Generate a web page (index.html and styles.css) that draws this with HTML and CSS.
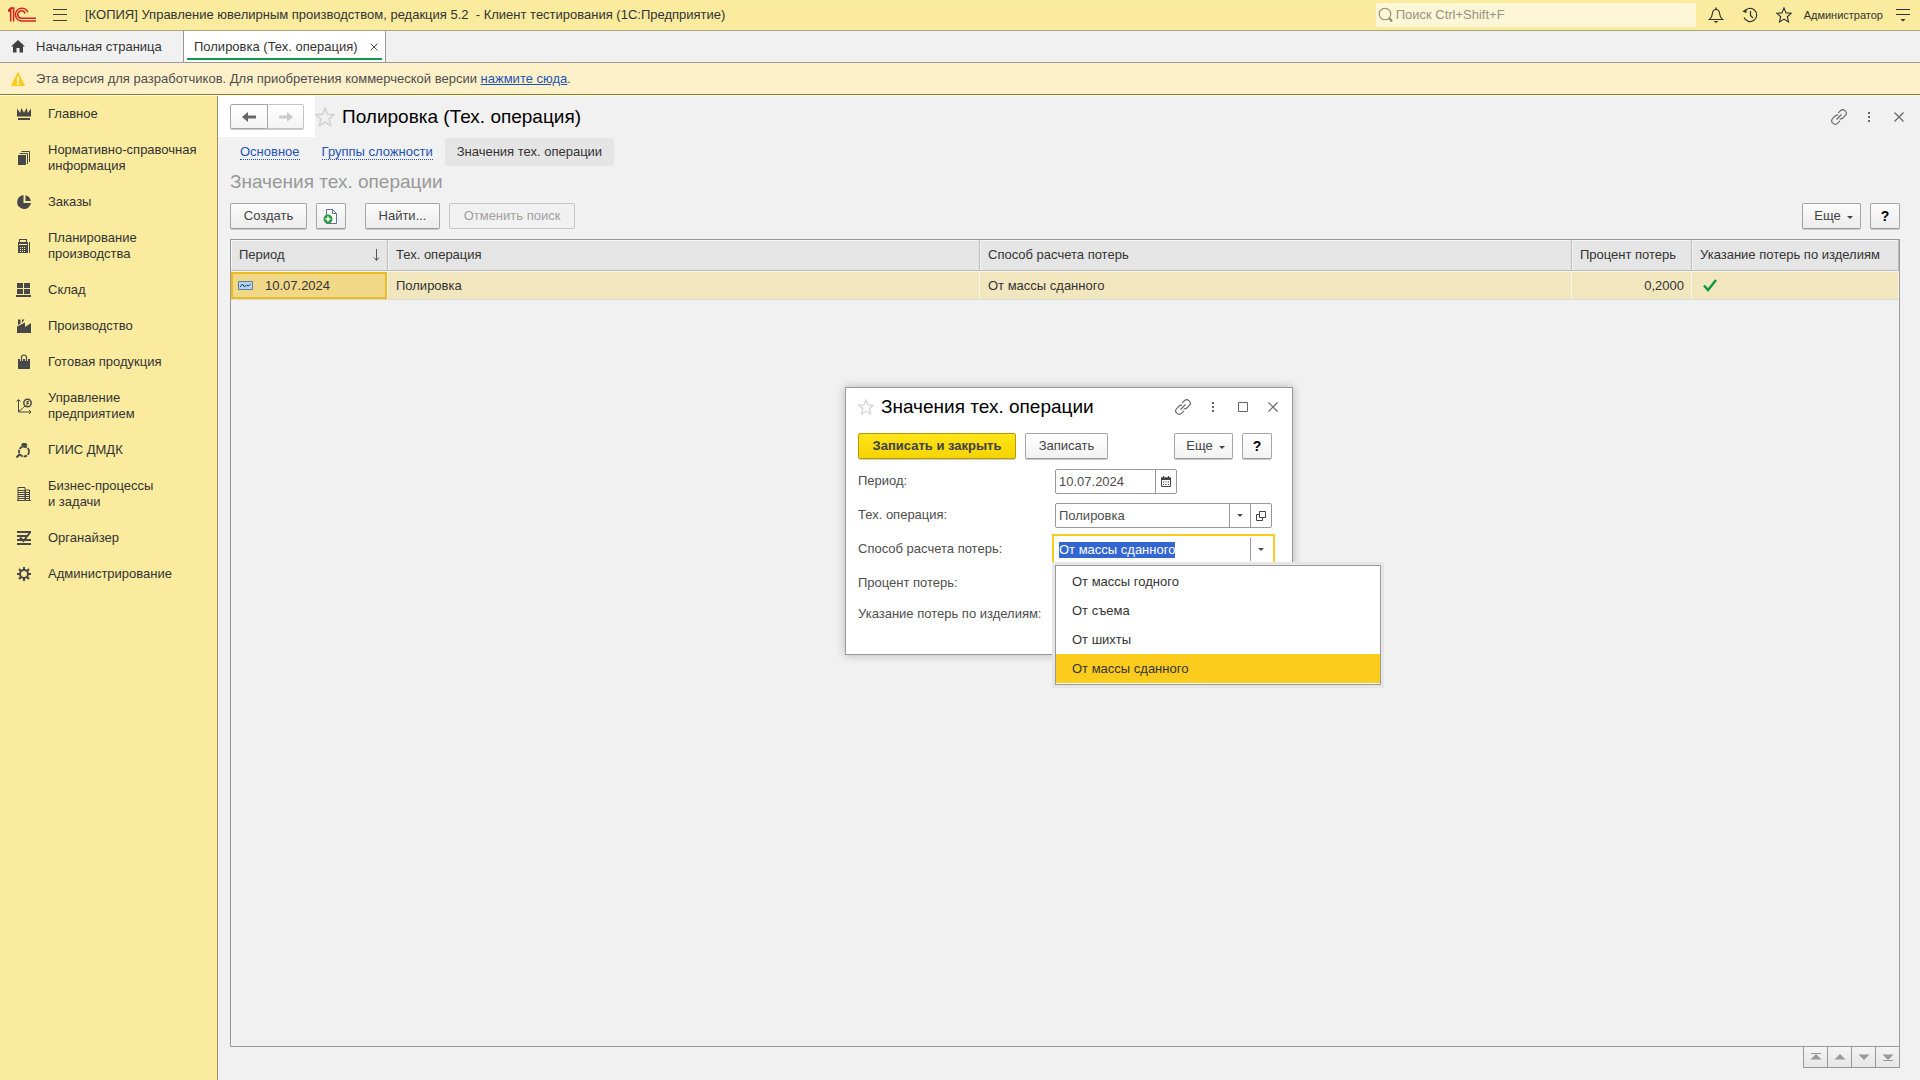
FILE: index.html
```html
<!DOCTYPE html>
<html lang="ru">
<head>
<meta charset="utf-8">
<title>Полировка (Тех. операция)</title>
<link rel="stylesheet" href="styles.css">
</head>
<body>
<svg class="sprite" aria-hidden="true">
  <symbol id="star" viewBox="0 0 18 18"><path d="M9 1l2.3 5.6 5.9.4-4.5 3.9 1.4 5.9L9 13.6l-5.1 3.2 1.4-5.9L.8 7l5.9-.4z" fill="none" stroke="currentColor" stroke-width="1.3"/></symbol>
  <symbol id="link" viewBox="0 0 16 16"><g fill="none" stroke="currentColor" stroke-width="1.1"><path d="M7 4.2l2.6-2.6a3 3 0 0 1 4.2 0l.6.6a3 3 0 0 1 0 4.2l-2.6 2.6a3 3 0 0 1-3 .7"/><path d="M9 11.8l-2.6 2.6a3 3 0 0 1-4.2 0l-.6-.6a3 3 0 0 1 0-4.2l2.6-2.6a3 3 0 0 1 3-.7"/><path d="M5.5 10.5l5-5"/></g></symbol>
  <symbol id="dots" viewBox="0 0 16 16"><path d="M7 3h2v2H7zM7 7h2v2H7zM7 11h2v2H7z" fill="currentColor"/></symbol>
  <symbol id="cross" viewBox="0 0 16 16"><path d="M3.5 3.5l9 9M12.5 3.5l-9 9" stroke="currentColor" stroke-width="1.2"/></symbol>
  <symbol id="caret" viewBox="0 0 6 4"><path d="M0 0h6L3 3z" fill="currentColor"/></symbol>
</svg>

<header class="titlebar">
  <svg class="logo" viewBox="0 0 30 16" aria-hidden="true"><g fill="none" stroke="#d8231f" stroke-width="1.6"><path d="M0 3.8h3M2.8 1.2v13.6M0 3.8L3 .9h2.8v13.9"/><path d="M20.5 5.2A6.6 6.6 0 1 0 14.3 14.2H29"/><path d="M17.6 6.4A3.8 3.8 0 1 0 14.3 11.3H29"/></g></svg>
  <button class="icon-btn menu" type="button" aria-label="Меню"><svg width="14" height="12" viewBox="0 0 14 12"><path d="M0 .5h14M0 5.5h14M0 11.5h14" stroke="#404040"/></svg></button>
  <span class="app-name">[КОПИЯ] Управление ювелирным производством, редакция 5.2&nbsp; - Клиент тестирования (1С:Предприятие)</span>
  <label class="search">
    <svg width="16" height="16" viewBox="0 0 16 16"><circle cx="7" cy="7" r="5.8" fill="none" stroke="#8f8a6c" stroke-width="1.1"/><path d="M11 11l3 3.5" stroke="#8f8a6c" stroke-width="2.2"/></svg>
    <input type="text" placeholder="Поиск Ctrl+Shift+F" aria-label="Поиск">
  </label>
  <div class="head-tools">
    <button class="icon-btn" type="button" aria-label="Уведомления"><svg width="16" height="16" viewBox="0 0 16 16"><path d="M1.5 12.5c2-1.5 2.5-3 2.8-5.5C4.600 4 6 2.500 8 2.500S11.400 4 11.700 7c.300 2.500.800 4 2.800 5.500z" fill="none" stroke="#333" stroke-width="1.2"/><path d="M8 .5v2" stroke="#333" stroke-width="1.5"/><path d="M5.500 14h5L8 16z" fill="#333"/></svg></button>
    <button class="icon-btn" type="button" aria-label="История"><svg width="16" height="16" viewBox="0 0 16 16"><path d="M2.200 5A6.600 6.600 0 1 1 2 10.500" fill="none" stroke="#333" stroke-width="1.2"/><path d="M.3 4.500L4.500 6V1.800z" fill="#333"/><path d="M8.500 4v4.500l2.500 2.500" fill="none" stroke="#333" stroke-width="1.2"/></svg></button>
    <button class="icon-btn" type="button" aria-label="Избранное"><svg width="16" height="16"><use href="#star"/></svg></button>
  </div>
  <span class="user">Администратор</span>
  <button class="icon-btn" type="button" aria-label="Настройки"><svg width="14" height="14" viewBox="0 0 14 14"><path d="M0 1.5h14M0 6.5h14" stroke="#333"/><path d="M4.500 11h5L7 13.500z" fill="#333"/></svg></button>
</header>

<nav class="tabs">
  <a class="tab home" href="#"><svg width="14" height="13" viewBox="0 0 14 13"><path d="M7 0l7 6.500h-2V12.500H8.500V8h-3v4.500H2v-6H0z" fill="#404040"/></svg>Начальная страница</a>
  <div class="tab active"><span>Полировка (Тех. операция)</span><button class="icon-btn" type="button" aria-label="Закрыть вкладку"><svg width="12" height="12"><use href="#cross"/></svg></button></div>
</nav>

<p class="notice">
  <svg width="14" height="14" viewBox="0 0 14 14"><path d="M7 .5L13.500 13.500H.5z" fill="#fbcb1e" stroke="#fbcb1e" stroke-linejoin="round"/><path d="M7 4.500v5M7 10.500v2" stroke="#fff" stroke-width="1.6"/></svg>
  <span>Эта версия для разработчиков. Для приобретения коммерческой версии <a href="#">нажмите сюда</a>.</span>
</p>

<div class="workspace">
  <nav class="sidebar">
    <a href="#"><svg viewBox="0 0 16 16"><path d="M1 2.500L4.200 7 5.300 2 8 6.800 10.700 2 11.800 7 15 2.500V10.500H1zM2 12h12v2H2z"/></svg><span>Главное</span></a>
    <a href="#"><svg viewBox="0 0 16 16"><path d="M2 5h8v10H2z"/><path d="M3.500 3.500h8V14M5.500 1.500h8V12" fill="none" stroke="#474747"/></svg><span>Нормативно-справочная<br>информация</span></a>
    <a href="#"><svg viewBox="0 0 16 16"><path d="M7.500 1v8H15A7 7 0 1 1 7.500 1z"/><path d="M9.500 1.200A7 7 0 0 1 14.800 7H9.500z"/></svg><span>Заказы</span></a>
    <a href="#"><svg viewBox="0 0 16 16"><path fill-rule="evenodd" d="M3 1h8v3h1v11H2V4h1zM4 2v2h6V2zM3 6v1h8V6zM4 9v1h1V9zM6 9v1h1V9zM8 9v1h1V9zM4 11v1h1v-1zM6 11v1h1v-1zM8 11v1h1v-1zM4 13v1h1v-1zM6 13v1h1v-1zM8 13v1h1v-1z"/><path d="M13 4h1v11h-1z"/></svg><span>Планирование<br>производства</span></a>
    <a href="#"><svg viewBox="0 0 16 16"><path d="M1 1h6v5H1zM8 1h6v5H8zM1 7h6v5H1zM8 7h6v5H8zM0 13h15v2H0z"/></svg><span>Склад</span></a>
    <a href="#"><svg viewBox="0 0 16 16"><path d="M1 15V8.500L9 4.500V9l6-4v10zM2 1.500h2.500v4L2 7zM6 1.500h2.500L6 5z"/></svg><span>Производство</span></a>
    <a href="#"><svg viewBox="0 0 16 16"><path d="M2 5h12v10H2z"/><path d="M5.500 7V3.500a2.500 2.500 0 0 1 5 0V7" fill="none" stroke="#faeb9e" stroke-width="3"/><path d="M5.500 8V3.500a2.500 2.500 0 0 1 5 0V8" fill="none" stroke="#474747" stroke-width="1.2"/></svg><span>Готовая продукция</span></a>
    <a href="#"><svg viewBox="0 0 16 16"><path d="M2.500 2v12H15M.5 3.500l2-2 2 2M13 12l2 2-2 2M3 13c3-1 3-3 6-5" fill="none" stroke="#474747"/><circle cx="11.500" cy="5" r="3.700" fill="none" stroke="#474747" stroke-width="1.5"/><path d="M10.500 3h2.500v1h-1.500v.7H13V6h-1.500v1.500h-1z"/></svg><span>Управление<br>предприятием</span></a>
    <a href="#"><svg viewBox="0 0 16 16"><circle cx="8" cy="9.500" r="5" fill="none" stroke="#474747" stroke-width="1.8" stroke-dasharray="3.5 1"/><path d="M5 3l1.500-2h3.500L11.500 3 8 6z"/><path d="M4 12L.5 15.500" stroke="#474747" stroke-width="2"/></svg><span>ГИИС ДМДК</span></a>
    <a href="#"><svg viewBox="0 0 16 16"><path d="M2 1.500h7v13H2zM9.500 4h4v10.500h-4z" fill="none" stroke="#474747"/><path d="M2 4.500h7M2 6.500h7M2 8.500h7M2 10.500h7M2 12.500h7M9 6.500h5M9 8.500h5M9 10.500h5M9 12.500h5M1 14.500h14" stroke="#474747"/></svg><span>Бизнес-процессы<br>и задачи</span></a>
    <a href="#"><svg viewBox="0 0 16 16"><path d="M1 2h14M1 6h10M1 10h14M1 14h14M14 2.500L7.500 11 4 7.500" fill="none" stroke="#474747" stroke-width="2"/></svg><span>Органайзер</span></a>
    <a href="#"><svg viewBox="0 0 16 16"><circle cx="8" cy="8" r="4" fill="none" stroke="#474747" stroke-width="2"/><path d="M8 1v3M8 12v3M1 8h3M12 8h3M3 3l2.200 2.200M10.800 10.800L13 13M13 3l-2.200 2.200M5.200 10.800L3 13" stroke="#474747" stroke-width="2"/></svg><span>Администрирование</span></a>
  </nav>

  <main class="content">
    <div class="page-head">
      <div class="history">
        <button type="button" aria-label="Назад"><svg width="14" height="12" viewBox="0 0 14 12"><path d="M0 6l6-5v3.500h8v3H6V11z" fill="#666"/></svg></button><button type="button" aria-label="Вперед" disabled><svg width="14" height="12" viewBox="0 0 14 12"><path d="M14 6L8 1v3.500H0v3h8V11z" fill="#ccc"/></svg></button>
      </div>
      <button class="icon-btn pale" type="button" aria-label="В избранное"><svg width="20" height="20"><use href="#star"/></svg></button>
      <h1>Полировка (Тех. операция)</h1>
      <div class="win-tools">
        <button class="icon-btn" type="button" aria-label="Получить ссылку"><svg width="16" height="16"><use href="#link"/></svg></button>
        <button class="icon-btn" type="button" aria-label="Дополнительно"><svg width="16" height="16"><use href="#dots"/></svg></button>
        <button class="icon-btn" type="button" aria-label="Закрыть"><svg width="16" height="16"><use href="#cross"/></svg></button>
      </div>
    </div>

    <nav class="subtabs"><a href="#"><span>Основное</span></a><a href="#"><span>Группы сложности</span></a><a class="current" href="#">Значения тех. операции</a></nav>
    <h2>Значения тех. операции</h2>

    <div class="commands">
      <button class="btn create" type="button">Создать</button>
      <button class="btn square" type="button" aria-label="Скопировать"><svg width="16" height="16" viewBox="0 0 16 16"><path d="M3.500 1.500h6l4 4v10h-10z" fill="#fff" stroke="#60758c"/><path d="M9.500 1.500v4h4" fill="none" stroke="#60758c"/><circle cx="5" cy="11" r="4.500" fill="#2c9b3f"/><path d="M5 8.500v5M2.500 11h5" stroke="#fff" stroke-width="1.5"/></svg></button>
      <button class="btn find" type="button">Найти...</button>
      <button class="btn cancel" type="button" disabled>Отменить поиск</button>
      <span class="spacer"></span>
      <button class="btn more" type="button">Еще <svg width="6" height="4"><use href="#caret"/></svg></button>
      <button class="btn square help" type="button">?</button>
    </div>

    <div class="grid">
      <table>
        <colgroup><col class="c-period"><col><col><col class="c-percent"><col class="c-flag"></colgroup>
        <thead><tr><th><div class="sorted">Период<svg width="7" height="12" viewBox="0 0 7 12"><path d="M3.500 0v11M1 8.500l2.500 3L6 8.500" fill="none" stroke="#555"/></svg></div></th><th>Тех. операция</th><th>Способ расчета потерь</th><th>Процент потерь</th><th>Указание потерь по изделиям</th></tr></thead>
        <tbody><tr><td class="cursor"><div class="period"><svg width="15" height="9" viewBox="0 0 15 9"><path d="M.5.5h14v8H.5z" fill="#b5d3ee" stroke="#5a7d9c"/><path d="M2 6l2.500-3L6.500 6l2-2 1.500 1 2.500-1.500" fill="none" stroke="#173f66"/></svg>10.07.2024</div></td><td>Полировка</td><td>От массы сданного</td><td class="num">0,2000</td><td class="flag"><svg width="14" height="13" viewBox="0 0 14 13"><path d="M1 6.500l4 4.500L13 1" fill="none" stroke="#0f9848" stroke-width="2.5"/></svg></td></tr></tbody>
      </table>
    </div>
    <div class="pager">
      <button type="button" aria-label="В начало"><svg viewBox="0 0 12 8"><path d="M1 .5h10" stroke="#999"/><path d="M6 1l5.500 5.500H.5z"/></svg></button>
      <button type="button" aria-label="Вверх"><svg viewBox="0 0 12 8"><path d="M6 1l5.500 5.500H.5z"/></svg></button>
      <button type="button" aria-label="Вниз"><svg viewBox="0 0 12 8"><path d="M6 7L.5 1.500h11z"/></svg></button>
      <button type="button" aria-label="В конец"><svg viewBox="0 0 12 8"><path d="M1 7.500h10" stroke="#999"/><path d="M6 7L.5 1.500h11z"/></svg></button>
    </div>
  </main>
</div>

<form class="dialog" role="dialog" aria-labelledby="dlg-title">
  <div class="dlg-head">
    <button class="icon-btn pale" type="button" aria-label="В избранное"><svg width="16" height="16"><use href="#star"/></svg></button>
    <h2 id="dlg-title">Значения тех. операции</h2>
    <div class="win-tools">
      <button class="icon-btn" type="button" aria-label="Получить ссылку"><svg width="16" height="16"><use href="#link"/></svg></button>
      <button class="icon-btn" type="button" aria-label="Дополнительно"><svg width="16" height="16"><use href="#dots"/></svg></button>
      <button class="icon-btn" type="button" aria-label="Развернуть"><svg width="16" height="16" viewBox="0 0 16 16"><path d="M3.500 3.500h9v9h-9z" fill="none" stroke="currentColor"/></svg></button>
      <button class="icon-btn" type="button" aria-label="Закрыть"><svg width="16" height="16"><use href="#cross"/></svg></button>
    </div>
  </div>
  <div class="dlg-commands">
    <button class="btn primary" type="button">Записать и закрыть</button>
    <button class="btn save" type="button">Записать</button>
    <span class="spacer"></span>
    <button class="btn more" type="button">Еще <svg width="6" height="4"><use href="#caret"/></svg></button>
    <button class="btn square help" type="button">?</button>
  </div>
  <div class="row"><label for="f-period">Период:</label>
    <div class="field date"><input id="f-period" type="text" value="10.07.2024"><button type="button" aria-label="Календарь"><svg width="10" height="11" viewBox="0 0 10 11"><path d="M.5 2h9v8.500h-9z" fill="none" stroke="#444"/><path d="M0 1.500h10v2.500H0zM2 0h1v2H2zM7 0h1v2H7z" fill="#444"/><path d="M2 6h6M2 8.500h6" stroke="#444" stroke-dasharray="1.2 1.2"/></svg></button></div></div>
  <div class="row"><label for="f-op">Тех. операция:</label>
    <div class="field"><input id="f-op" type="text" value="Полировка"><button type="button" aria-label="Выбрать"><svg width="6" height="4"><use href="#caret"/></svg></button><button type="button" aria-label="Открыть"><svg width="10" height="10" viewBox="0 0 10 10"><path d="M3.500.5h6v6h-6zM3 3.500H.5v6h6V7" fill="none" stroke="#444"/></svg></button></div></div>
  <div class="row"><label for="f-method">Способ расчета потерь:</label>
    <div class="field focused"><input id="f-method" type="text" role="combobox" aria-expanded="true" aria-controls="methods" value="От массы сданного"><button type="button" aria-label="Выбрать"><svg width="6" height="4"><use href="#caret"/></svg></button>
      <ul class="options" id="methods" role="listbox">
        <li role="option">От массы годного</li>
        <li role="option">От съема</li>
        <li role="option">От шихты</li>
        <li role="option" aria-selected="true">От массы сданного</li>
      </ul>
    </div></div>
  <div class="row"><label for="f-percent">Процент потерь:</label><div class="field date"><input id="f-percent" type="text"></div></div>
  <div class="row short"><label for="f-items">Указание потерь по изделиям:</label><input id="f-items" type="checkbox" checked></div>
</form>
<script src="script.js"></script>
</body>
</html>
```
FILE: styles.css
```css
* { box-sizing: border-box; }
body {
  margin: 0;
  min-height: 100vh;
  display: flex;
  flex-direction: column;
  position: relative;
  background: #f1f1f1;
  color: #333;
  font: 13px/16px "Liberation Sans", Arial, sans-serif;
}
button, input { font: inherit; color: inherit; margin: 0; }
button { padding: 0; }
svg { display: block; flex: none; }
h1, h2, p, ul { margin: 0; padding: 0; font-weight: normal; }
a { color: #1d53b5; }
.sprite { position: absolute; width: 0; height: 0; }
.spacer { flex: 1; }
.icon-btn { border: 0; background: none; display: flex; align-items: center; justify-content: center; color: #333; }

/* Title bar */
.titlebar {
  height: 31px;
  display: flex;
  align-items: center;
  padding: 0 10px 0 8px;
  background: #faeb9e;
  border-bottom: 1px solid #a9a57c;
}
.logo { width: 29px; height: 16px; }
.menu { margin: 0 18px 0 16px; }
.app-name { flex: 1; white-space: pre; }
.search {
  width: 320px;
  height: 24px;
  display: flex;
  align-items: center;
  gap: 2px;
  padding-left: 2px;
  background: #fdf7d8;
  border-radius: 2px;
  margin-right: 12px;
}
.search input { flex: 1; border: 0; background: none; padding: 0; outline: 0; }
.search input::placeholder { color: #98937a; opacity: 1; }
.head-tools { display: flex; gap: 18px; }
.user { font-size: 11px; margin: 0 13px 0 12px; }

/* Open windows */
.tabs { display: flex; height: 32px; border-bottom: 1px solid #999; }
.tab { display: flex; align-items: center; border-right: 1px solid #999; color: #333; text-decoration: none; }
.home { width: 184px; gap: 11px; padding-left: 11px; }
.active { position: relative; width: 202px; padding: 0 3px; background: #fff; }
.active > span { flex: 1; padding-left: 7px; line-height: 28px; }
.active::after { content: ""; position: absolute; left: 3px; right: 3px; bottom: 2px; height: 2px; background: #0f9950; }
.active .icon-btn { padding: 0 2px; }

.notice {
  display: flex;
  align-items: center;
  gap: 11px;
  height: 32px;
  padding-left: 11px;
  background: #fef1ca;
  border-bottom: 1px solid #94790f;
  color: #4d4d4d;
}

.workspace { flex: 1; display: flex; border-top: 1px solid #fff; }

/* Sections */
.sidebar { width: 218px; background: #faeb9e; border-right: 1px solid #99905f; }
.sidebar a { display: flex; align-items: center; gap: 16px; padding: 10px 0 10px 16px; color: #333; text-decoration: none; }
.sidebar svg { width: 16px; height: 16px; fill: #474747; }

/* Form */
.content { flex: 1; display: flex; flex-direction: column; padding: 0 20px 12px 0; min-width: 0; }
.content > * { margin-left: 12px; }
.content > .page-head { margin-left: 0; }
.page-head { display: flex; align-items: center; height: 42px; padding-bottom: 1px; }
.history { display: flex; width: 97px; height: 41px; padding: 8px 0 8px 12px; background: #fff; }
.history button { width: 38px; height: 25px; display: flex; align-items: center; justify-content: center; border: 1px solid #a6a6a6; border-radius: 2px 0 0 2px; background: linear-gradient(#fff, #f4f4f4); box-shadow: 0 1px 0 #ccc; }
.history button + button { border-left: 0; border-color: #c4c4c4; border-radius: 0 2px 2px 0; width: 36px; }
h1, h2 { font-size: 19px; line-height: 24px; color: #000; }
.page-head h1 { flex: 1; margin-left: 7px; }
.pale { color: #d0d0d0; }
.win-tools { display: flex; gap: 14px; }
.win-tools .icon-btn { color: #666; }
.page-head .win-tools { margin-right: -7px; }
.subtabs { display: flex; gap: 2px; line-height: 28px; }
.subtabs a { padding: 0 10px; text-decoration: none; }
.subtabs span { border-bottom: 1px dotted #1d53b5; }
.subtabs .current { padding: 0 12px; background: #e5e5e5; border-radius: 3px; color: #333; }
.content h2 { color: #999; margin-top: 4px; }

.commands { display: flex; gap: 9px; margin-top: 9px; }
.btn {
  display: flex;
  align-items: center;
  justify-content: center;
  gap: 6px;
  height: 26px;
  border: 1px solid #a6a6a6;
  border-bottom-color: #999;
  border-radius: 2px;
  background: linear-gradient(#fbfbfb, #ececec);
  box-shadow: 0 1px 0 #ccc;
  color: #444;
}
.btn:disabled { color: #a0a0a0; border-color: #c6c6c6; background: #f1f1f1; box-shadow: none; }
.create { width: 77px; }
.square { width: 30px; }
.find { width: 75px; margin-left: 10px; }
.cancel { width: 126px; }
.more { width: 59px; padding-left: 4px; }
.more svg { margin-top: 4px; }
.help { color: #000; font-size: 14px; font-weight: bold; }

.grid { flex: 1; margin-top: 10px; border: 1px solid #999; }
table { width: 100%; border-collapse: separate; border-spacing: 0; table-layout: fixed; }
.c-period { width: 157px; }
.c-percent { width: 120px; }
.c-flag { width: 207px; }
th, td { padding: 0 7px 0 8px; text-align: left; font-weight: normal; white-space: nowrap; }
th { height: 31px; background: #e5e5e5; border-right: 1px solid #bbb; border-bottom: 1px solid #bbb; box-shadow: inset 1px 1px 0 #f5f5f5; }
td { height: 29px; background: #f2e6be; border-right: 1px solid #fbf7e8; border-top: 1px solid #f8f5ea; border-bottom: 1px solid #d9d9d9; }
.sorted { display: flex; align-items: center; justify-content: space-between; }
td.cursor { padding: 0; }
.period { display: flex; align-items: center; gap: 12px; height: 27px; padding-left: 5px; border: 2px solid #ebbc1f; background: #f0d887; }
td.num { text-align: right; }
td.flag { padding-left: 11px; }

.pager { display: flex; align-self: flex-end; border-left: 1px solid #999; }
.pager button { width: 24px; height: 21px; display: flex; align-items: center; justify-content: center; border: solid #999; border-width: 0 1px 1px 0; background: linear-gradient(#f4f4f4, #e6e6e6); }
.pager svg { width: 12px; height: 8px; fill: #999; }

/* Record window */
.dialog {
  position: absolute;
  left: 845px;
  top: 387px;
  width: 448px;
  padding: 7px 20px 33px 12px;
  background: #fff;
  border: 1px solid #999;
  box-shadow: 0 0 9px rgba(0, 0, 0, .25);
  color: #4d4d4d;
}
.dlg-head { display: flex; align-items: center; gap: 7px; height: 24px; }
.dlg-head h2 { flex: 1; }
.dlg-head .win-tools { margin-right: -9px; }
.dlg-commands { display: flex; gap: 9px; margin: 14px 0 10px; }
.dlg-commands .btn { background: linear-gradient(#fff, #f2f2f2); }
.dlg-commands .primary { width: 158px; background: linear-gradient(#ffe41a, #f5d400); border-color: #b79c00; font-weight: bold; color: #404040; }
.save { width: 83px; }
.row { display: flex; align-items: flex-start; height: 34px; }
.row label { flex: none; width: 197px; line-height: 23px; white-space: nowrap; }
.row.short { height: 16px; align-items: center; }
.field { position: relative; flex: 1; min-width: 0; display: flex; height: 25px; border: 1px solid #999; border-radius: 2px; background: #fff; }
.field.date { flex: none; width: 122px; }
.field input { flex: 1; min-width: 0; border: 0; padding: 0 0 0 3px; outline: 0; background: none; }
.field button { width: 21px; border: 0; border-left: 1px solid #999; background: none; display: flex; align-items: center; justify-content: center; }
.field.focused { z-index: 1; border-color: transparent; border-radius: 0; outline: 2px solid #fbcb1e; outline-offset: 1px; }
.focused input::selection { background: #3366d1; color: #fff; }
.options {
  position: absolute;
  left: -1px;
  top: 27px;
  width: 326px;
  padding: 1px 0;
  list-style: none;
  background: #fff;
  border: 1px solid #999;
  box-shadow: 0 0 0 3px #e6e6e6;
  color: #333;
}
.options li { padding-left: 16px; line-height: 29px; }
.options [aria-selected] { background: #fbcb1e; }
```
FILE: script.js
```js
const method = document.getElementById('f-method');
method.focus();
method.select();
```
